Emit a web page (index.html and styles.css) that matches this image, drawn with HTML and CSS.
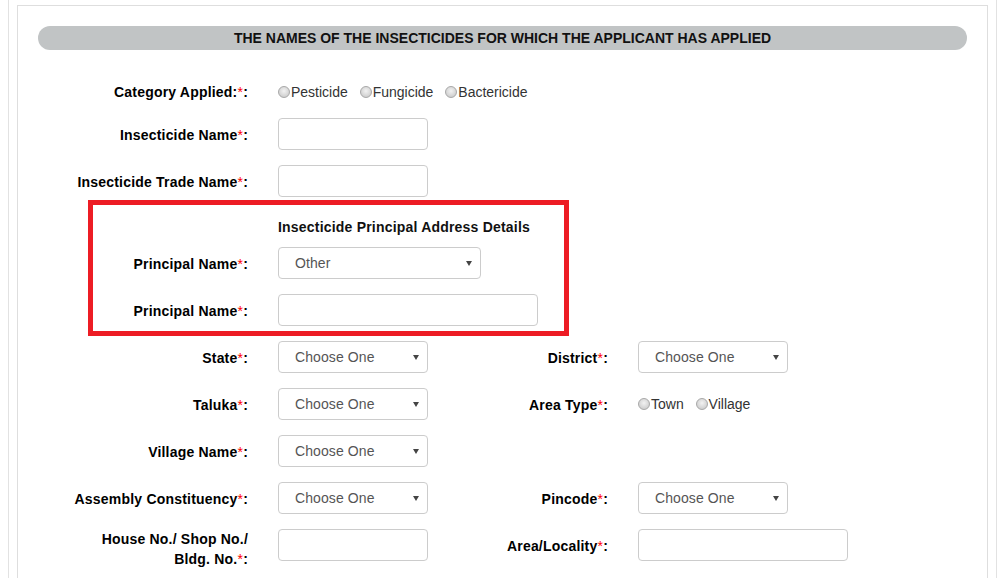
FILE: index.html
```html
<!DOCTYPE html>
<html lang="en">
<head>
<meta charset="utf-8">
<title>Insecticide Application</title>
<link rel="stylesheet" href="styles.css">
</head>
<body>
<div class="page">
  <div class="panel">
    <div class="section-title">THE NAMES OF THE INSECTICIDES FOR WHICH THE APPLICANT HAS APPLIED</div>
    <form class="form">
      <div class="row row-radio">
        <label class="lbl">Category Applied:<span class="req">*</span>:</label>
        <div class="ctrl ctrl-wide radios">
          <label class="radio"><input type="radio" name="cat">Pesticide</label>
          <label class="radio"><input type="radio" name="cat">Fungicide</label>
          <label class="radio"><input type="radio" name="cat">Bactericide</label>
        </div>
      </div>
      <div class="row">
        <label class="lbl">Insecticide Name<span class="req">*</span>:</label>
        <div class="ctrl ctrl-wide"><input class="txt w150" type="text"></div>
      </div>
      <div class="row">
        <label class="lbl">Insecticide Trade Name<span class="req">*</span>:</label>
        <div class="ctrl ctrl-wide"><input class="txt w150" type="text"></div>
      </div>

      <div class="group">
        <div class="row row-heading">
          <div class="lbl"></div>
          <div class="ctrl ctrl-wide heading">Insecticide Principal Address Details</div>
        </div>
        <div class="row">
          <label class="lbl">Principal Name<span class="req">*</span>:</label>
          <div class="ctrl ctrl-wide">
            <div class="select w203"><select><option>Other</option></select></div>
          </div>
        </div>
        <div class="row">
          <label class="lbl">Principal Name<span class="req">*</span>:</label>
          <div class="ctrl ctrl-wide"><input class="txt w260" type="text"></div>
        </div>
        <div class="highlight"></div>
      </div>

      <div class="row">
        <label class="lbl">State<span class="req">*</span>:</label>
        <div class="ctrl"><div class="select w150"><select><option>Choose One</option></select></div></div>
        <label class="lbl">District<span class="req">*</span>:</label>
        <div class="ctrl"><div class="select w150"><select><option>Choose One</option></select></div></div>
      </div>
      <div class="row">
        <label class="lbl">Taluka<span class="req">*</span>:</label>
        <div class="ctrl"><div class="select w150"><select><option>Choose One</option></select></div></div>
        <label class="lbl">Area Type<span class="req">*</span>:</label>
        <div class="ctrl radios">
          <label class="radio"><input type="radio" name="area">Town</label>
          <label class="radio"><input type="radio" name="area">Village</label>
        </div>
      </div>
      <div class="row">
        <label class="lbl">Village Name<span class="req">*</span>:</label>
        <div class="ctrl"><div class="select w150"><select><option>Choose One</option></select></div></div>
      </div>
      <div class="row">
        <label class="lbl">Assembly Constituency<span class="req">*</span>:</label>
        <div class="ctrl"><div class="select w150"><select><option>Choose One</option></select></div></div>
        <label class="lbl">Pincode<span class="req">*</span>:</label>
        <div class="ctrl"><div class="select w150"><select><option>Choose One</option></select></div></div>
      </div>
      <div class="row">
        <label class="lbl lbl-two">House No./ Shop No./<br>Bldg. No.<span class="req">*</span>:</label>
        <div class="ctrl"><input class="txt w150" type="text"></div>
        <label class="lbl">Area/Locality<span class="req">*</span>:</label>
        <div class="ctrl"><input class="txt w210" type="text"></div>
      </div>
    </form>
  </div>
</div>
</body>
</html>
```
FILE: styles.css
```css
html, body {
  margin: 0;
  padding: 0;
  background: #fff;
  font-family: "Liberation Sans", Arial, sans-serif;
  font-size: 14px;
  color: #000;
}

.page {
  margin: 0 9px 0 8px;
  height: 578px;
  box-sizing: border-box;
  border-left: 1px solid #e2e2e2;
  border-right: 1px solid #e2e2e2;
  padding: 5px 8px 0 8px;
  overflow: hidden;
}

.panel {
  border: 1px solid #dedede;
  border-bottom: none;
  padding: 20px 20px 0 20px;
  height: 100%;
  box-sizing: border-box;
}

.section-title {
  height: 24px;
  line-height: 24px;
  background: #c1c4c5;
  border-radius: 12px;
  text-align: center;
  font-weight: bold;
  font-size: 14px;
  color: #111;
}

.form {
  padding-top: 26px;
}

.row {
  display: grid;
  grid-template-columns: 210px 150px 150px auto;
  column-gap: 30px;
  align-items: start;
  margin-bottom: 15px;
}

.row-radio {
  min-height: 27px;
}

.lbl {
  text-align: right;
  font-weight: bold;
  font-size: 14px;
  line-height: 20px;
  padding-top: 7px;
  letter-spacing: 0.2px;
  color: #000;
}

.row-radio .lbl {
  padding-top: 6px;
}

.lbl-two {
  padding-top: 0;
}

.req {
  color: #ff0000;
  font-weight: normal;
}

.ctrl-wide {
  grid-column: 2 / span 3;
}

.radios {
  padding-top: 6px;
  line-height: 20px;
  color: #333;
  white-space: nowrap;
}

.row .radios {
  padding-top: 6px;
}

.radio {
  margin-right: 8px;
}

.radio input {
  appearance: none;
  -webkit-appearance: none;
  width: 12px;
  height: 12px;
  margin: 0 1px 0 0;
  border: 1px solid #a8a8a8;
  border-radius: 50%;
  background: radial-gradient(circle at 50% 40%, #f2f2f2 0%, #d6d6d6 60%, #c4c4c4 100%);
  vertical-align: -1px;
  box-sizing: border-box;
}

.txt {
  display: block;
  height: 32px;
  box-sizing: border-box;
  border: 1px solid #cccccc;
  border-radius: 4px;
  background: #fff;
  padding: 0 12px;
  font: inherit;
}

.w150 { width: 150px; }
.w203 { width: 203px; }
.w210 { width: 210px; }
.w260 { width: 260px; }

.select {
  position: relative;
  height: 32px;
  box-sizing: border-box;
  border: 1px solid #cccccc;
  border-radius: 4px;
  background: #fff;
}

.select select {
  appearance: none;
  -webkit-appearance: none;
  width: 100%;
  height: 100%;
  border: none;
  background: transparent;
  padding: 0 0 0 16px;
  margin: 0;
  font: inherit;
  font-size: 14px;
  letter-spacing: 0.1px;
  color: #555;
  outline: none;
}

.select::after {
  content: "";
  position: absolute;
  right: 8px;
  top: 13px;
  border-left: 3px solid transparent;
  border-right: 3px solid transparent;
  border-top: 5px solid #444;
  pointer-events: none;
}

.group {
  position: relative;
}

.row-heading {
  margin-bottom: 10px;
}

.heading {
  font-weight: bold;
  font-size: 14px;
  line-height: 20px;
  padding-top: 5px;
  letter-spacing: 0.2px;
  color: #111;
}

.highlight {
  position: absolute;
  top: -12px;
  bottom: -10px;
  left: 50px;
  width: 481px;
  box-sizing: border-box;
  border: 5px solid #ed1c24;
  pointer-events: none;
}
```
